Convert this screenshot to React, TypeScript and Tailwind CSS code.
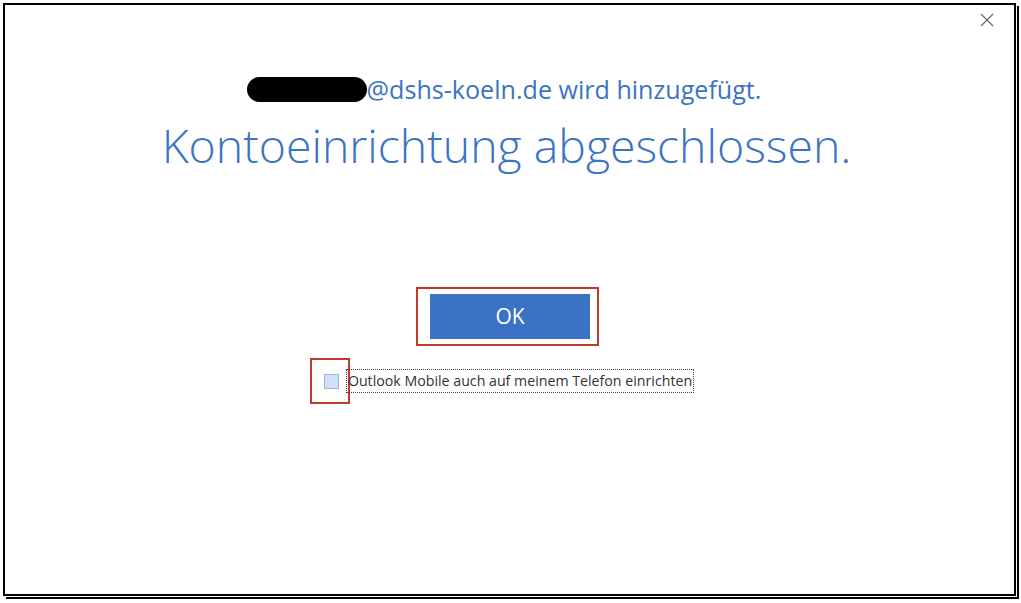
import React from "react";

export default function App() {
  return (
    <div className="w-[1021px] h-[603px] bg-white relative overflow-hidden" style={{ fontFamily: '"Open Sans", "Noto Sans", sans-serif' }}>
      <div className="ml-[3px] mt-[3px] w-[1013px] h-[593px] border-2 border-black shadow-[1px_1px_0_0_#ffffff,3px_3px_0_0_#000000] bg-white flex flex-col">
        <div className="flex justify-end pr-[20px] pt-[6px] h-[30px]">
          <svg width="14" height="14" viewBox="0 0 14 14" className="mt-[2px]">
            <path d="M1 1 L13 13 M13 1 L1 13" stroke="#666" strokeWidth="1.2" fill="none" />
          </svg>
        </div>
        <div className="flex justify-center items-center mt-[40px] h-[28px] pr-[11px]">
          <div className="w-[120px] h-[25px] rounded-full bg-black" />
          <span className="text-[25.1px] leading-[28px] text-[#3b74c2]">@dshs-koeln.de wird hinzugefügt.</span>
        </div>
        <div className="flex justify-center mt-[14px] pr-[6px]">
          <span className="text-[46.4px] leading-[56px] font-light text-[#3b74c2]">Kontoeinrichtung abgeschlossen.</span>
        </div>
        <div className="flex justify-center mt-[114px] pr-[4px]">
          <div className="border-2 border-[#c0392b] pl-[12px] pr-[7px] py-[5px]">
            <button className="w-[160px] h-[45px] bg-[#3b72c6] text-white text-[21px] flex items-center justify-center">OK</button>
          </div>
        </div>
        <div className="flex justify-center mt-[12px] pr-[15px]">
          <div className="flex items-center">
            <div className="w-[40px] h-[46px] border-2 border-[#c0392b] flex items-center justify-center">
              <div className="w-[15px] h-[15px] bg-[#cfe0f7] border border-[#9fb6d6] ml-[3px]" />
            </div>
            <div className="border border-dotted border-[#444] px-[1px] h-[24px] flex items-center -ml-[4px]">
              <span className="text-[14.2px] text-[#333]">Outlook Mobile auch auf meinem Telefon einrichten</span>
            </div>
          </div>
        </div>
      </div>
    </div>
  );
}
